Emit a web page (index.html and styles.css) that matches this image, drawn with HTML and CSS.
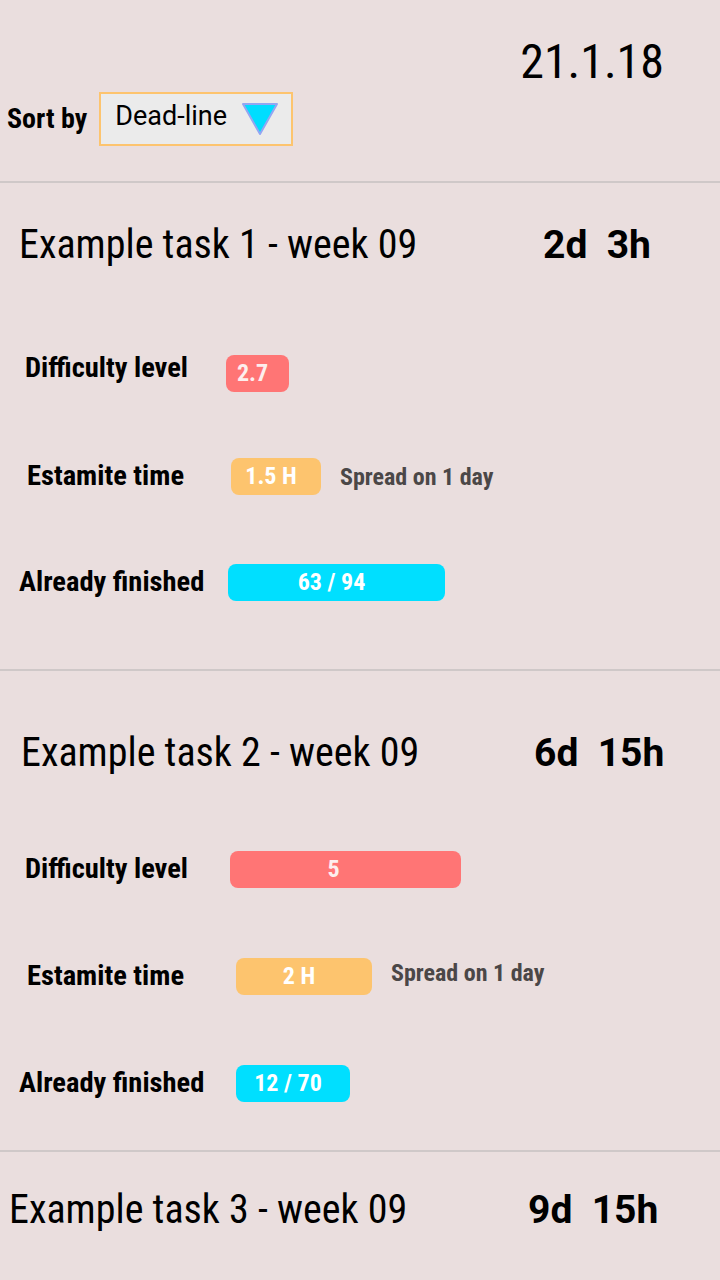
FILE: index.html
```html
<!DOCTYPE html>
<html lang="en">
<head>
<meta charset="utf-8">
<title>Tasks</title>
<link rel="stylesheet" href="styles.css">
</head>
<body>
<div class="screen">
  <header class="top">
    <div class="date">21.1.18</div>
    <div class="sort">
      <span class="sort-label">Sort by</span>
      <div class="select">
        <span class="select-value">Dead-line</span>
        <svg class="select-arrow" width="38" height="34" viewBox="0 0 38 34" aria-hidden="true">
          <polygon points="2,2 36,2 19,32" fill="#00DDFF" stroke="#93A6F2" stroke-width="2" stroke-linejoin="round"/>
        </svg>
      </div>
    </div>
  </header>

  <section class="task task--one">
    <div class="task-head">
      <h2 class="task-title">Example task 1 - week 09</h2>
      <span class="task-left">2d&nbsp; 3h</span>
    </div>
    <div class="stats">
      <div class="stat stat--diff">
        <span class="stat-label stat-label--raised">Difficulty level</span>
        <span class="pill pill--red" style="width:63px">2.7</span>
      </div>
      <div class="stat stat--est">
        <span class="stat-label">Estamite time</span>
        <span class="pill pill--orange" style="width:90px">1.5 H</span>
        <span class="spread">Spread on 1 day</span>
      </div>
      <div class="stat stat--fin">
        <span class="stat-label">Already finished</span>
        <span class="pill pill--cyan" style="width:217px">63 / 94</span>
      </div>
    </div>
  </section>

  <section class="task task--two">
    <div class="task-head">
      <h2 class="task-title">Example task 2 - week 09</h2>
      <span class="task-left">6d&nbsp; 15h</span>
    </div>
    <div class="stats">
      <div class="stat stat--diff">
        <span class="stat-label">Difficulty level</span>
        <span class="pill pill--red pill--wide" style="width:231px">5</span>
      </div>
      <div class="stat stat--est">
        <span class="stat-label">Estamite time</span>
        <span class="pill pill--orange" style="width:136px">2 H</span>
        <span class="spread spread--raised">Spread on 1 day</span>
      </div>
      <div class="stat stat--fin">
        <span class="stat-label">Already finished</span>
        <span class="pill pill--cyan" style="width:114px">12 / 70</span>
      </div>
    </div>
  </section>

  <section class="task task--three">
    <div class="task-head">
      <h2 class="task-title">Example task 3 - week 09</h2>
      <span class="task-left">9d&nbsp; 15h</span>
    </div>
  </section>
</div>
</body>
</html>
```

FILE: styles.css
```css
* { box-sizing: border-box; }

html, body {
  margin: 0;
  padding: 0;
  background: #EADEDE;
}

body {
  font-family: "Roboto Condensed", Roboto, "Liberation Sans", sans-serif;
  font-stretch: condensed;
  color: #000;
}

.screen {
  width: 720px;
  height: 1280px;
  overflow: hidden;
  background: #EADEDE;
}

/* header */
.top {
  padding-top: 32px;
  padding-bottom: 35px;
  border-bottom: 2px solid #CFC8C8;
}

.date {
  height: 60px;
  line-height: 60px;
  font-size: 48px;
  font-weight: 400;
  text-align: right;
  padding-right: 56px;
}

.sort {
  display: flex;
  align-items: center;
  height: 54px;
  padding-left: 7px;
  gap: 12px;
}

.sort-label {
  font-size: 28px;
  font-weight: 700;
  line-height: 1;
}

.select {
  width: 194px;
  height: 54px;
  display: flex;
  align-items: center;
  background: #EBEBEB;
  border: 2px solid #FDC46E;
  padding-left: 14px;
  padding-right: 12px;
}

.select-value {
  font-family: Roboto, "Liberation Sans", sans-serif;
  font-stretch: normal;
  font-size: 27px;
  line-height: 1;
  padding-bottom: 6px;
}

.select-arrow {
  margin-left: auto;
  display: block;
}

/* tasks */
.task {
  border-bottom: 2px solid #CFC8C8;
}

.task--one { padding-top: 32px; padding-bottom: 68px; }
.task--two { padding-top: 52px; padding-bottom: 48px; }
.task--three { padding-top: 28px; border-bottom: none; }

.task-head {
  display: flex;
  align-items: center;
  height: 60px;
}

.task-title {
  margin: 0;
  font-size: 40px;
  font-weight: 400;
  line-height: 60px;
  white-space: nowrap;
}

.task--one .task-title { width: 543px; padding-left: 19px; }
.task--two .task-title { width: 534px; padding-left: 21px; }
.task--three .task-title { width: 528px; padding-left: 9px; }

.task-left {
  font-family: Roboto, "Liberation Sans", sans-serif;
  font-stretch: normal;
  font-size: 39px;
  font-weight: 700;
  white-space: nowrap;
}

.stats {
  display: flex;
  flex-direction: column;
}

.task--one .stats { margin-top: 80px; gap: 66px; }
.task--one .stat--fin { margin-top: 3px; }
.task--two .stats { margin-top: 68px; gap: 70px; }

.stat {
  display: flex;
  align-items: center;
  height: 37px;
}

.stat-label {
  font-size: 28.5px;
  font-weight: 700;
  line-height: 1;
  white-space: nowrap;
}

.stat-label--raised { margin-bottom: 10px; }

.stat--diff .stat-label { padding-left: 25px; }
.stat--est .stat-label { padding-left: 27px; }
.stat--fin .stat-label { padding-left: 19px; }

.task--one .stat--diff .stat-label { width: 226px; }
.task--one .stat--est .stat-label { width: 231px; }
.task--one .stat--fin .stat-label { width: 228px; }
.task--two .stat--diff .stat-label { width: 230px; }
.task--two .stat--est .stat-label { width: 236px; }
.task--two .stat--fin .stat-label { width: 236px; }

.pill {
  flex: none;
  height: 37px;
  line-height: 37px;
  border-radius: 8px;
  color: #FFFFFF;
  font-size: 24px;
  font-weight: 700;
  text-align: center;
  padding-right: 10px;
  white-space: nowrap;
}

.pill--wide { padding-right: 24px; }

.pill--red { background: #FF7575; color: #FDEEEE; }
.pill--orange { background: #FDC46E; }
.pill--cyan { background: #00DFFF; }

.spread {
  margin-left: 19px;
  font-size: 24px;
  font-weight: 700;
  color: #4B4747;
  line-height: 1;
  white-space: nowrap;
}

.spread--raised { margin-bottom: 8px; }
```
